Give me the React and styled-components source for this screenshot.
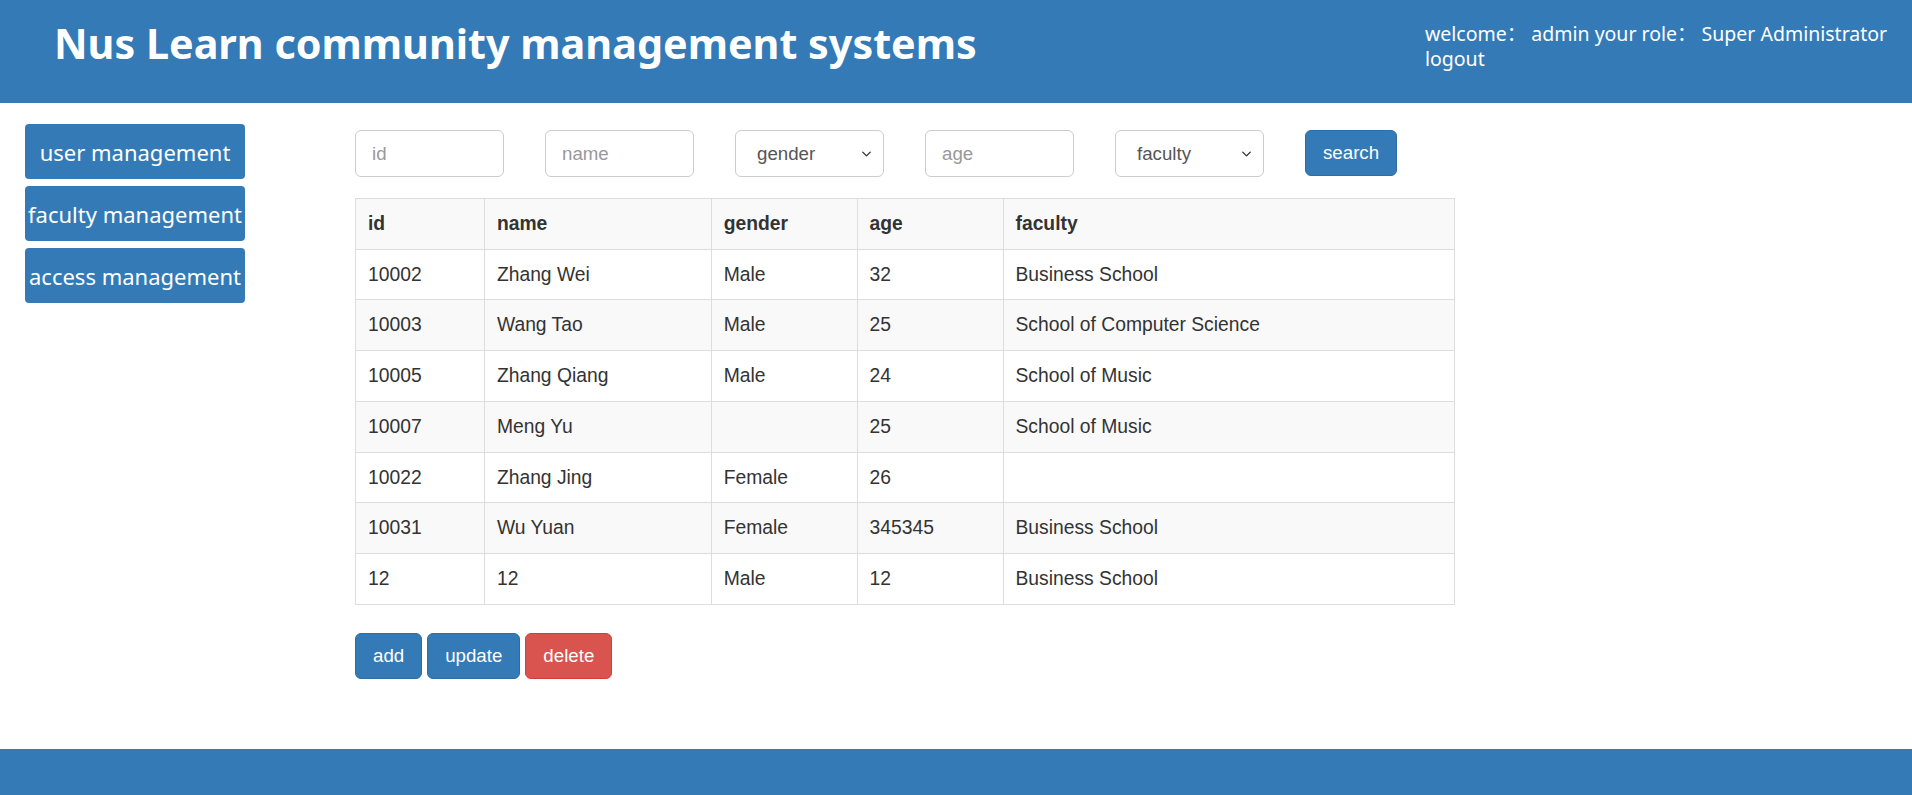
import React from "react";
import styled, { createGlobalStyle } from "styled-components";
import { ChevronDown } from "lucide-react";

const GlobalStyle = createGlobalStyle`
  html, body {
    margin: 0;
    padding: 0;
    background: #fff;
  }
  body {
    font-family: "Liberation Sans", Arial, sans-serif;
    color: #333;
  }
  * {
    box-sizing: border-box;
  }
`;

const Page = styled.div`
  min-height: 795px;
  display: flex;
  flex-direction: column;
`;

const Header = styled.header`
  height: 103px;
  background: #337ab7;
  color: #fff;
  display: flex;
  justify-content: space-between;
  align-items: flex-start;
  padding: 0 22px 0 54px;
  font-family: "Noto Sans", "Noto Sans CJK SC", sans-serif;
`;

const Title = styled.h1`
  margin: 15px 0 0;
  font-size: 41.3px;
  font-weight: 700;
`;

const UserInfo = styled.div`
  margin-top: 21px;
  font-size: 19.5px;
  line-height: 25px;
  width: 465px;
  white-space: nowrap;
`;

const Logout = styled.a`
  display: block;
  color: #fff;
  cursor: pointer;
`;

const Body = styled.div`
  flex: 1;
  display: flex;
`;

const Sidebar = styled.nav`
  width: 245px;
  padding: 21px 0 0 25px;
  display: flex;
  flex-direction: column;
  gap: 7px;
`;

const SideButton = styled.button`
  width: 220px;
  height: 55px;
  border: none;
  border-radius: 4px;
  background: #337ab7;
  color: #fff;
  font-family: "Noto Sans", "Open Sans", sans-serif;
  font-size: 22px;
  padding: 0;
  white-space: nowrap;
  cursor: pointer;
`;

const Main = styled.main`
  margin-left: 110px;
  padding-top: 27px;
  width: 1100px;
`;

const SearchRow = styled.div`
  display: flex;
  gap: 41px;
  margin-bottom: 21px;
`;

const Field = styled.input`
  width: 149px;
  height: 47px;
  padding: 10px 16px;
  font-size: 18.7px;
  font-family: "Liberation Sans", Arial, sans-serif;
  color: #555;
  border: 1px solid #ccc;
  border-radius: 6px;
  outline: none;
  &::placeholder {
    color: #999;
  }
`;

const SelectWrap = styled.div`
  position: relative;
  width: 149px;
  height: 47px;
`;

const Select = styled.select`
  appearance: none;
  width: 100%;
  height: 100%;
  padding: 0 30px 0 21px;
  font-size: 18.7px;
  font-family: "Liberation Sans", Arial, sans-serif;
  color: #555;
  background: #fff;
  border: 1px solid #ccc;
  border-radius: 6px;
  outline: none;
`;

const Arrow = styled.span`
  position: absolute;
  right: 10px;
  top: 50%;
  transform: translateY(-50%);
  display: flex;
  color: #333;
  pointer-events: none;
`;

const Btn = styled.button`
  height: 46px;
  padding: 0 17px;
  font-size: 18.7px;
  font-family: "Liberation Sans", Arial, sans-serif;
  color: #fff;
  background: ${(p) => (p.$danger ? "#d9534f" : "#337ab7")};
  border: 1px solid ${(p) => (p.$danger ? "#d43f3a" : "#2e6da4")};
  border-radius: 6px;
  cursor: pointer;
`;

const Table = styled.table`
  width: 1100px;
  border-collapse: collapse;
  font-size: 19.3px;
  line-height: 25.7px;
`;

const Row = styled.tr`
  background: ${(p) => (p.$striped ? "#f9f9f9" : "#fff")};
`;

const Cell = styled.td`
  border: 1px solid #ddd;
  padding: 12px 12px;
  text-align: left;
  font-weight: ${(p) => (p.$head ? 700 : 400)};
  color: #333;
`;

const Actions = styled.div`
  display: flex;
  gap: 5px;
  margin-top: 28px;
`;

const Footer = styled.footer`
  height: 46px;
  background: #337ab7;
`;

const columns = [
  { key: "id", width: 129 },
  { key: "name", width: 227 },
  { key: "gender", width: 146 },
  { key: "age", width: 146 },
  { key: "faculty", width: 452 },
];

const rows = [
  ["10002", "Zhang Wei", "Male", "32", "Business School"],
  ["10003", "Wang Tao", "Male", "25", "School of Computer Science"],
  ["10005", "Zhang Qiang", "Male", "24", "School of Music"],
  ["10007", "Meng Yu", "", "25", "School of Music"],
  ["10022", "Zhang Jing", "Female", "26", ""],
  ["10031", "Wu Yuan", "Female", "345345", "Business School"],
  ["12", "12", "Male", "12", "Business School"],
];

function Dropdown({ label }) {
  return (
    <SelectWrap>
      <Select defaultValue="">
        <option value="">{label}</option>
      </Select>
      <Arrow>
        <ChevronDown size={15} strokeWidth={2.2} />
      </Arrow>
    </SelectWrap>
  );
}

export default function App() {
  return (
    <Page>
      <GlobalStyle />
      <Header>
        <Title>Nus Learn community management systems</Title>
        <UserInfo>
          welcome：&nbsp;admin your role：&nbsp;Super Administrator
          <Logout>logout</Logout>
        </UserInfo>
      </Header>
      <Body>
        <Sidebar>
          <SideButton>user management</SideButton>
          <SideButton>faculty management</SideButton>
          <SideButton>access management</SideButton>
        </Sidebar>
        <Main>
          <SearchRow>
            <Field placeholder="id" />
            <Field placeholder="name" />
            <Dropdown label="gender" />
            <Field placeholder="age" />
            <Dropdown label="faculty" />
            <Btn>search</Btn>
          </SearchRow>
          <Table>
            <colgroup>
              {columns.map((c) => (
                <col key={c.key} style={{ width: c.width }} />
              ))}
            </colgroup>
            <tbody>
              <Row $striped>
                {columns.map((c) => (
                  <Cell key={c.key} $head>
                    {c.key}
                  </Cell>
                ))}
              </Row>
              {rows.map((r, i) => (
                <Row key={i} $striped={i % 2 === 1}>
                  {r.map((v, j) => (
                    <Cell key={j}>{v}</Cell>
                  ))}
                </Row>
              ))}
            </tbody>
          </Table>
          <Actions>
            <Btn>add</Btn>
            <Btn>update</Btn>
            <Btn $danger>delete</Btn>
          </Actions>
        </Main>
      </Body>
      <Footer />
    </Page>
  );
}
